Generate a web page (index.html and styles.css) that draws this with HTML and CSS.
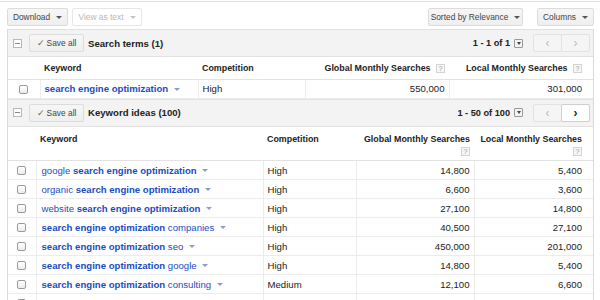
FILE: index.html
```html
<!DOCTYPE html>
<html lang="en">
  <head>
    <meta charset="UTF-8" />
    <title>Keyword ideas</title>
    <link rel="stylesheet" href="styles.css">
  </head>
  <body>
    <div class="page">
      <div class="toolbar">
        <button class="btn">Download <span class="caret"></span></button>
        <button class="btn disabled">View as text <span class="caret"></span></button>
        <div class="spacer"></div>
        <button class="btn">Sorted by Relevance <span class="caret"></span></button>
        <button class="btn columns-btn">Columns <span class="caret"></span></button>
      </div>

      <div class="panel">
        <div class="group-bar">
          <span class="collapse"></span>
          <button class="btn save-btn"><span class="check">&#10003;</span> Save all</button>
          <span class="group-title">Search terms (1)</span>
          <div class="spacer"></div>
          <span class="pager-text">1 - 1 of 1</span>
          <span class="pager-menu"></span>
          <div class="pager-btns">
            <button class="btn page-btn off">&lsaquo;</button>
            <button class="btn page-btn off">&rsaquo;</button>
          </div>
        </div>
        <table class="grid terms">
          <colgroup>
            <col class="c-check" /><col class="c-kw" /><col class="c-comp" /><col class="c-global" /><col />
          </colgroup>
          <thead>
            <tr>
              <th></th>
              <th>Keyword</th>
              <th>Competition</th>
              <th class="num">Global Monthly Searches <span class="help">?</span></th>
              <th class="num last">Local Monthly Searches <span class="help">?</span></th>
            </tr>
          </thead>
          <tbody>
            <tr>
              <td class="chk"><span class="box"></span></td>
              <td class="kw"><b>search engine optimization</b> <span class="arrow"></span></td>
              <td>High</td>
              <td class="num">550,000</td>
              <td class="num last">301,000</td>
            </tr>
          </tbody>
        </table>

        <div class="group-bar">
          <span class="collapse"></span>
          <button class="btn save-btn"><span class="check">&#10003;</span> Save all</button>
          <span class="group-title">Keyword ideas (100)</span>
          <div class="spacer"></div>
          <span class="pager-text">1 - 50 of 100</span>
          <span class="pager-menu"></span>
          <div class="pager-btns">
            <button class="btn page-btn off">&lsaquo;</button>
            <button class="btn page-btn on">&rsaquo;</button>
          </div>
        </div>
        <table class="grid ideas">
          <colgroup>
            <col class="c-check" /><col class="c-kw" /><col class="c-comp" /><col class="c-global" /><col />
          </colgroup>
          <thead>
            <tr>
              <th></th>
              <th>Keyword</th>
              <th>Competition</th>
              <th class="num">Global Monthly Searches<br /><span class="help">?</span></th>
              <th class="num last">Local Monthly Searches<br /><span class="help">?</span></th>
            </tr>
          </thead>
          <tbody>
            <tr>
              <td class="chk"><span class="box"></span></td>
              <td class="kw">google <b>search engine optimization</b> <span class="arrow"></span></td>
              <td>High</td><td class="num">14,800</td><td class="num last">5,400</td>
            </tr>
            <tr>
              <td class="chk"><span class="box"></span></td>
              <td class="kw">organic <b>search engine optimization</b> <span class="arrow"></span></td>
              <td>High</td><td class="num">6,600</td><td class="num last">3,600</td>
            </tr>
            <tr>
              <td class="chk"><span class="box"></span></td>
              <td class="kw">website <b>search engine optimization</b> <span class="arrow"></span></td>
              <td>High</td><td class="num">27,100</td><td class="num last">14,800</td>
            </tr>
            <tr>
              <td class="chk"><span class="box"></span></td>
              <td class="kw"><b>search engine optimization</b> companies <span class="arrow"></span></td>
              <td>High</td><td class="num">40,500</td><td class="num last">27,100</td>
            </tr>
            <tr>
              <td class="chk"><span class="box"></span></td>
              <td class="kw"><b>search engine optimization</b> seo <span class="arrow"></span></td>
              <td>High</td><td class="num">450,000</td><td class="num last">201,000</td>
            </tr>
            <tr>
              <td class="chk"><span class="box"></span></td>
              <td class="kw"><b>search engine optimization</b> google <span class="arrow"></span></td>
              <td>High</td><td class="num">14,800</td><td class="num last">5,400</td>
            </tr>
            <tr>
              <td class="chk"><span class="box"></span></td>
              <td class="kw"><b>search engine optimization</b> consulting <span class="arrow"></span></td>
              <td>Medium</td><td class="num">12,100</td><td class="num last">6,600</td>
            </tr>
            <tr>
              <td class="chk"><span class="box"></span></td>
              <td class="kw"></td>
              <td></td><td class="num"></td><td class="num last"></td>
            </tr>
          </tbody>
        </table>
      </div>
    </div>
  </body>
</html>
```

FILE: styles.css
```css
* {
  margin: 0;
  padding: 0;
  box-sizing: border-box;
}
body {
  font-family: "Liberation Sans", Arial, sans-serif;
  color: #222;
  background: #fff;
  overflow: hidden;
}
.page {
  padding: 1px 6px 0 7px;
}
.page::before {
  content: '';
  display: block;
  height: 1px;
  margin: 0 -7px;
  background: #e3e3e3;
}
.spacer {
  flex: 1;
}
.btn {
  font-family: inherit;
  font-size: 8.4px;
  color: #444;
  height: 18px;
  padding: 0 7px;
  background: linear-gradient(#f6f6f6, #efefef);
  border: 1px solid #dcdcdc;
  border-radius: 2px;
  cursor: pointer;
  display: inline-flex;
  align-items: center;
  justify-content: center;
  gap: 4px;
  white-space: nowrap;
}
.btn.disabled {
  color: #b8b8b8;
  background: #fff;
  border-color: #e6e6e6;
}
.caret {
  width: 0;
  height: 0;
  border-left: 3px solid transparent;
  border-right: 3px solid transparent;
  border-top: 3px solid #555;
  margin-left: 2px;
}
.btn.disabled .caret {
  border-top-color: #c4c4c4;
}
.toolbar {
  display: flex;
  align-items: flex-start;
  gap: 4px;
  padding-top: 6px;
  height: 24px;
  margin-bottom: 3px;
}
.toolbar .btn:first-child {
  width: 61px;
}
.toolbar .btn.disabled {
  width: 70px;
}
.toolbar .btn:nth-child(4) {
  width: 95px;
  margin-right: 10px;
}
.columns-btn {
  width: 57px;
}
.panel {
  border-left: 1px solid #dadada;
  border-right: 1px solid #dadada;
  height: 300px;
}
.group-bar {
  display: flex;
  align-items: center;
  height: 28px;
  padding: 0 3px 0 5px;
  background: #f3f3f3;
  border-top: 1px solid #e2e2e2;
  border-bottom: 1px solid #e2e2e2;
}
.collapse {
  width: 9px;
  height: 9px;
  border: 1px solid #b9b9b9;
  background: #fff;
  position: relative;
  margin-right: 7px;
}
.collapse::after {
  content: '';
  position: absolute;
  left: 1px;
  right: 1px;
  top: 3px;
  height: 1px;
  background: #888;
}
.save-btn {
  width: 55px;
  gap: 2px;
  margin-right: 4px;
}
.check {
  font-size: 9px;
  color: #666;
}
.group-title {
  font-weight: bold;
  font-size: 9.6px;
}
.pager-text {
  font-weight: bold;
  font-size: 9.2px;
}
.pager-menu {
  width: 9px;
  height: 9px;
  border: 1px solid #999;
  border-radius: 1px;
  margin: 0 10px 0 4px;
  display: inline-flex;
  justify-content: center;
  align-items: center;
}
.pager-menu::after {
  content: '';
  border-left: 2.5px solid transparent;
  border-right: 2.5px solid transparent;
  border-top: 3px solid #444;
}
.pager-btns {
  display: flex;
}
.page-btn {
  width: 29px;
  font-size: 12px;
  color: #bbb;
  background: #f5f5f5;
  border-color: #e2e2e2;
}
.page-btn + .page-btn {
  margin-left: -1px;
}
.page-btn.on {
  background: #fff;
  color: #222;
  font-weight: bold;
  border-color: #cfcfcf;
}
.grid {
  width: 100%;
  border-collapse: collapse;
  table-layout: fixed;
}
.terms .c-check { width: 32px; }
.terms .c-kw { width: 158px; }
.terms .c-comp { width: 107px; }
.terms .c-global { width: 144px; }
.ideas .c-check { width: 28px; }
.ideas .c-kw { width: 227px; }
.ideas .c-comp { width: 93px; }
.ideas .c-global { width: 118px; }
.grid th {
  font-size: 8.9px;
  font-weight: bold;
  text-align: left;
  vertical-align: top;
  padding: 6px 4px 0 4px;
  border-bottom: 1px solid #e2e2e2;
  white-space: nowrap;
}
.terms th {
  height: 22px;
}
.ideas th {
  height: 34px;
  padding-top: 7px;
  line-height: 11px;
}
.grid td {
  font-size: 9.6px;
  height: 19px;
  padding: 0 4px;
  border-bottom: 1px solid #ececec;
  border-left: 1px solid #ececec;
  white-space: nowrap;
  overflow: hidden;
}
.grid td:first-child {
  border-left: none;
}
.grid .num {
  text-align: right;
}
.grid .last {
  padding-right: 11px;
}
.ideas .kw {
  padding-left: 5px;
}
.kw {
  color: #1a4dbf;
}
.arrow {
  display: inline-block;
  vertical-align: middle;
  margin-left: 3px;
  border-left: 3px solid transparent;
  border-right: 3px solid transparent;
  border-top: 3px solid #8b9dc8;
}
.chk {
  text-align: center;
}
.box {
  display: inline-block;
  vertical-align: middle;
  width: 9px;
  height: 9px;
  border: 1px solid #9a9a9a;
  border-radius: 2px;
  background: linear-gradient(#fff, #ececec);
}
.help {
  display: inline-block;
  width: 9px;
  height: 9px;
  border: 1px solid #d4d4d4;
  background: #f6f6f6;
  color: #999;
  font-size: 7px;
  font-weight: normal;
  line-height: 7px;
  text-align: center;
  vertical-align: middle;
  margin-left: 3px;
}
.ideas .help {
  margin-top: 2px;
}
```
